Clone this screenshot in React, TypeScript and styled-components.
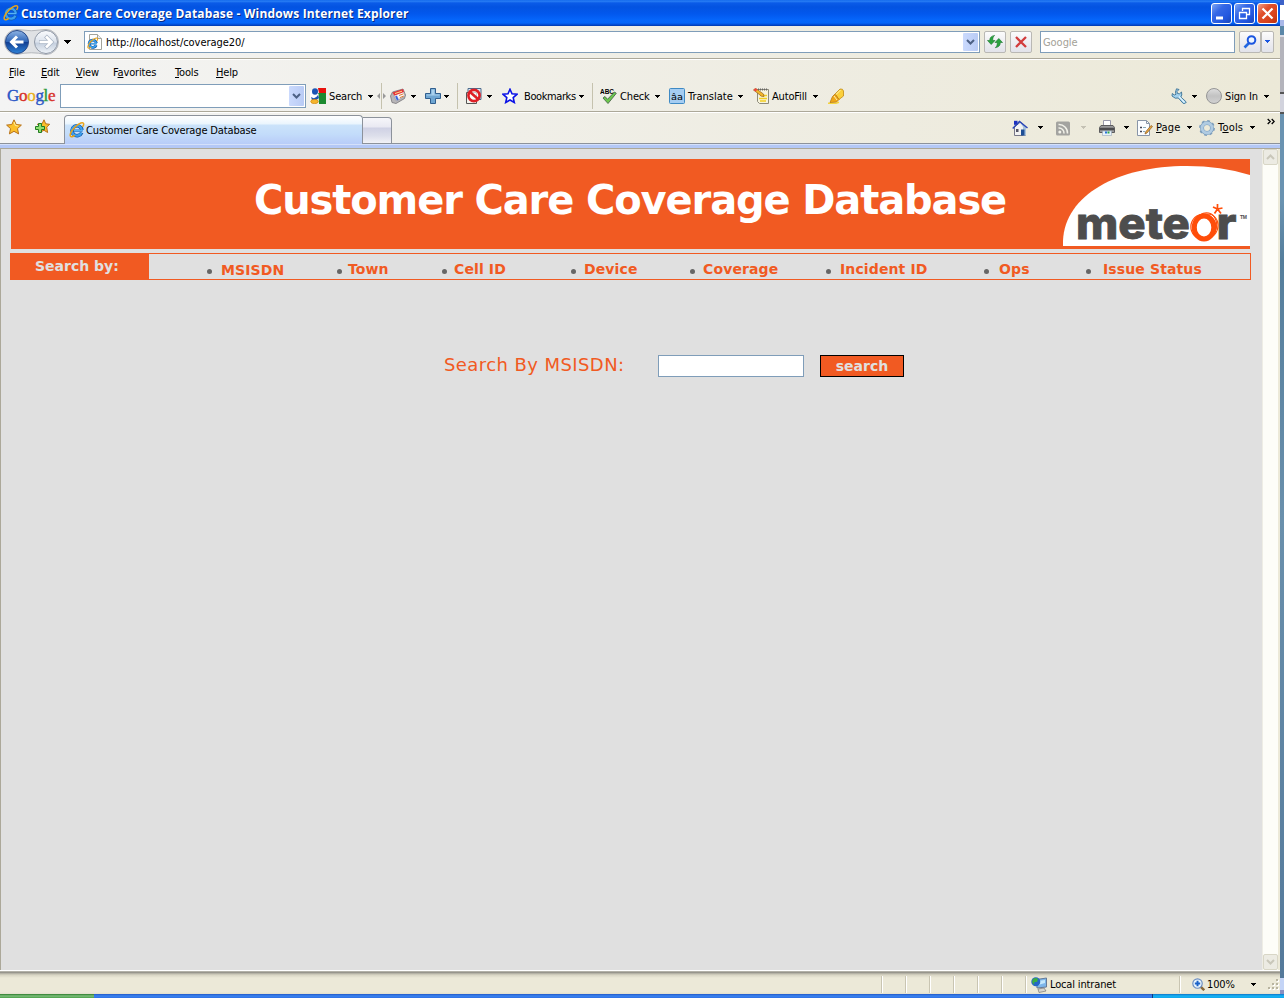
import React from 'react';
import styled, { createGlobalStyle } from 'styled-components';

const GlobalStyle = createGlobalStyle`
  * { box-sizing: border-box; }
  body { margin: 0; overflow: hidden; background: #5f87a4; }
`;

const UI = '"DejaVu Sans Condensed", "DejaVu Sans", sans-serif';
const PAGE = '"DejaVu Sans", Verdana, sans-serif';
const ORANGE = '#f15a22';

const Screen = styled.div`
  width: 1284px;
  height: 998px;
  display: flex;
  flex-direction: column;
  font-family: ${UI};
  font-size: 11px;
  color: #000;
  overflow: hidden;
`;
const Desktop = styled.div`
  display: flex;
  height: 994px;
`;
const Window = styled.div`
  width: 1280px;
  display: flex;
  flex-direction: column;
  background: #ece9d8;
`;
const Sliver = styled.div`
  width: 4px;
  background: linear-gradient(#3c62c8 0 5px, #fff 5px 20px, #a9b8e8 20px 26px, #5b87a8 26px 35px, #d9dbe6 35px 37px, #b4b4bc 37px 92px, #555 92px 94px, #d2d3dd 94px 112px, #555 112px 114px, #6a93b1 114px 200px, #557e9c 260px, #6a90ac 520px, #54799a 978px, #c4d4f6 978px 990px, #8a8fc0 990px);
`;
const Cell = styled.div<{ $w: number }>`
  width: ${p => p.$w}px;
  flex: none;
  display: flex;
  align-items: center;
`;
const Label = styled.span<{ $ls?: number; $w?: number }>`
  ${p => (p.$w ? `width: ${p.$w}px;` : '')}
  flex: none;
  white-space: nowrap;
  line-height: 14px;
  padding-top: 1px;
  letter-spacing: ${p => p.$ls ?? -0.15}px;
`;

/* ---- Title bar ---- */
const TitleBar = styled.div`
  height: 26px;
  flex: none;
  display: flex;
  align-items: center;
  padding: 0 2px 0 3px;
  background: linear-gradient(#0a5fe8 0, #2b82f6 1px, #0a5be8 3px, #0353e1 7px, #0258ee 14px, #0566fb 20px, #0465f8 23px, #0146cc 25px, #0139a8 26px);
`;
const TitleText = styled.div`
  flex: 1;
  padding: 1px 0 0 2px;
  color: #fff;
  font: 700 12px/16px "Open Sans", "Noto Sans", sans-serif;
  letter-spacing: 0.16px;
  text-shadow: 1px 1px 0 #0a2a80;
  white-space: nowrap;
`;
const WinButton = styled.div<{ $close?: boolean }>`
  width: 21px;
  height: 21px;
  margin-left: 2px;
  border: 1px solid #fff;
  border-radius: 3px;
  background: ${p => (p.$close
    ? 'linear-gradient(135deg, #f0a088, #e0502c 35%, #d8431c 70%, #b83210)'
    : 'linear-gradient(135deg, #7ea6f4, #3568e6 35%, #2358e0 70%, #1a45b8)')};
`;

/* ---- Address bar ---- */
const AddressBar = styled.div`
  height: 33px;
  flex: none;
  display: flex;
  align-items: center;
  padding: 0 0 1px 3px;
  background: linear-gradient(90deg, #f4f4f4, #f0efe8 40%, #ece9d8);
  border-bottom: 1px solid #aca899;
`;
const Field = styled.div<{ $w: number; $h: number; $mr?: number }>`
  width: ${p => p.$w}px;
  height: ${p => p.$h}px;
  margin-right: ${p => p.$mr ?? 0}px;
  flex: none;
  display: flex;
  align-items: center;
  padding: 0 1px 0 2px;
  background: #fff;
  border: 1px solid #7f9db9;
`;
const FieldText = styled.div<{ $muted?: boolean }>`
  flex: 1;
  color: ${p => (p.$muted ? '#a3a197' : '#000')};
  line-height: 14px;
  letter-spacing: -0.05px;
  padding-top: 2px;
`;
const DropButton = styled.div<{ $h: number }>`
  width: 15px;
  height: ${p => p.$h}px;
  display: flex;
  align-items: center;
  justify-content: center;
  border-radius: 1px;
  background: linear-gradient(90deg, #cbdafd, #b9cbf5);
`;
const ToolButton = styled.div<{ $w?: number; $mr?: number }>`
  width: ${p => p.$w ?? 22}px;
  height: 22px;
  margin-right: ${p => p.$mr ?? 0}px;
  flex: none;
  display: flex;
  align-items: center;
  justify-content: center;
  border: 1px solid #b9b8b4;
  border-radius: 2px;
  background: linear-gradient(#fcfcfc, #eeeef2 50%, #e2e3ea);
`;

/* ---- Menu and toolbar ---- */
const Menu = styled.div`
  height: 25px;
  flex: none;
  display: flex;
  align-items: center;
  padding-left: 9px;
  border-top: 1px solid #fff;
  background: linear-gradient(90deg, #f4f4f4, #f0efe8 40%, #ece9d8);
`;
const GoogleBar = styled.div`
  height: 28px;
  flex: none;
  display: flex;
  align-items: center;
  padding: 0 0 3px 7px;
  background: linear-gradient(90deg, #f4f4f4, #f0efe8 40%, #ece9d8);
  border-bottom: 1px solid #aca899;
`;
const GoogleMark = styled.div`
  width: 53px;
  flex: none;
  font: 17px/20px "Liberation Serif", serif;
  letter-spacing: -0.3px;
  -webkit-text-stroke: 0.4px;
`;
const Tint = styled.span<{ $c: string }>`
  color: ${p => p.$c};
  -webkit-text-stroke-color: ${p => p.$c};
`;
const Divider = styled.div<{ $mr: number }>`
  width: 1px;
  height: 26px;
  flex: none;
  margin-right: ${p => p.$mr}px;
  background: #c5c2ae;
`;
const Spacer = styled.div`
  flex: 1;
`;

/* ---- Tabs ---- */
const TabRow = styled.div`
  height: 32px;
  flex: none;
  display: flex;
  align-items: flex-end;
  padding-left: 6px;
  border-top: 1px solid #fff;
  border-bottom: 1px solid #8c929b;
  background: linear-gradient(90deg, #f4f4f4, #f0efe8 40%, #ece9d8);
`;
const TabIcons = styled.div<{ $raised?: boolean }>`
  display: flex;
  height: 31px;
  align-items: center;
  padding-bottom: ${p => (p.$raised ? 2 : 0)}px;
`;
const Tab = styled.div`
  width: 299px;
  height: 29px;
  margin-bottom: -1px;
  flex: none;
  display: flex;
  align-items: center;
  padding-left: 4px;
  border: 1px solid #8c929b;
  border-bottom: 0;
  border-radius: 4px 4px 0 0;
  background: linear-gradient(#fff, #eaf5fd 8px, #cbe3fa 9px, #c3dcfa 18px, #b8ccf8);
`;
const NewTab = styled.div`
  width: 29px;
  height: 26px;
  flex: none;
  border: 1px solid #8c929b;
  border-left: 0;
  border-bottom: 0;
  border-radius: 0 4px 0 0;
  background: linear-gradient(#f6f6fa, #e9e9f2 9px, #cfd1e4 10px, #dddfeb 18px, #f2f2f6);
`;
const Band = styled.div`
  height: 5px;
  flex: none;
  background: #b4c8f6;
  border-top: 1px solid #d4e0fa;
  border-bottom: 1px solid #aca899;
`;
const Overflow = styled.div`
  align-self: flex-start;
  width: 13px;
  padding-top: 3px;
`;

/* ---- Page ---- */
const Viewport = styled.div`
  height: 821px;
  flex: none;
  display: flex;
  border-left: 1px solid #aca899;
  background: #e0e0e0;
`;
const Page = styled.div`
  width: 1261px;
  flex: none;
  padding: 10px 0 0 9px;
  font-family: ${PAGE};
`;
const Banner = styled.div`
  width: 1239px;
  height: 90px;
  margin: 0 0 4px 1px;
  display: flex;
  align-items: flex-start;
  background: ${ORANGE};
`;
const Heading = styled.h1`
  margin: 0;
  width: 1052px;
  padding: 17px 0 0 243px;
  color: #fff;
  font: 700 40px/48px ${PAGE};
  letter-spacing: -1.13px;
  white-space: nowrap;
`;
const SearchNav = styled.div`
  width: 1241px;
  height: 27px;
  display: flex;
  border: 1px solid ${ORANGE};
  color: ${ORANGE};
  font-weight: 700;
  font-size: 14px;
`;
const NavTitle = styled.div`
  width: 138px;
  margin-right: 58px;
  padding: 3px 0 0 24px;
  flex: none;
  color: #e0e0e0;
  background: ${ORANGE};
  line-height: 18px;
`;
const NavItem = styled.div<{ $w: number; $gap: number; $drop?: number }>`
  width: ${p => p.$w}px;
  flex: none;
  display: flex;
  align-items: flex-start;
  gap: ${p => p.$gap}px;
  padding-top: ${p => 6 + (p.$drop ?? 0)}px;
  line-height: 18px;
  letter-spacing: 0.12px;
  white-space: nowrap;
`;
const Bullet = styled.i<{ $up?: number }>`
  width: 5px;
  height: 5px;
  flex: none;
  margin-top: ${p => 9 - (p.$up ?? 0)}px;
  border-radius: 50%;
  background: #666;
`;
const SearchForm = styled.div`
  display: flex;
  align-items: center;
  padding: 74px 0 0 434px;
  color: ${ORANGE};
`;
const FormLabel = styled.label`
  width: 214px;
  flex: none;
  font-size: 18px;
  line-height: 22px;
  letter-spacing: 0.42px;
  padding-bottom: 2px;
`;
const TextInput = styled.input`
  width: 146px;
  height: 22px;
  margin: 0 16px 0 0;
  padding: 0 2px;
  border: 1px solid #7f9db9;
  background: #fff;
  outline: 0;
`;
const SubmitButton = styled.button`
  width: 84px;
  height: 22px;
  padding: 0;
  border: 1px solid #000;
  background: ${ORANGE};
  color: #e0e0e0;
  font: 700 14px/18px ${PAGE};
`;
const Scrollbar = styled.div`
  width: 16px;
  flex: none;
  display: flex;
  flex-direction: column;
  justify-content: space-between;
  background: #fdfdf8;
  border-left: 1px solid #eeede5;
`;
const ScrollButton = styled.div`
  width: 15px;
  height: 16px;
  display: flex;
  align-items: center;
  justify-content: center;
  background: #ecebe3;
  border: 1px solid #d8d6c6;
  border-radius: 2px;
`;
const Edge = styled.div`
  flex: 1;
  background: #ece9d8;
`;

/* ---- Status bar and taskbar ---- */
const StatusBar = styled.div`
  height: 25px;
  flex: none;
  display: flex;
  align-items: center;
  padding: 3px 0 0 881px;
  border-top: 1px solid #fff;
  background: linear-gradient(#e0dfd4 0, #85837c 1px, #a9a79c 2px, #d8d5c4 4px, #ece9d8 7px, #ece9d8 21px, #dedac6 24px);
`;
const Pane = styled.div<{ $w: number; $pad?: number }>`
  width: ${p => p.$w}px;
  height: 17px;
  flex: none;
  display: flex;
  align-items: center;
  padding-left: ${p => p.$pad ?? 0}px;
  border-left: 1px solid #c9c5b2;
  box-shadow: inset 1px 0 0 #fff;
`;
const Taskbar = styled.div`
  height: 4px;
  flex: none;
  display: flex;
  background: linear-gradient(#2158c8, #3a84f0 2px, #2f70e4);
`;
const StartButton = styled.div`
  width: 94px;
  background: linear-gradient(#2a7a2c, #7fbf7c 2px, #4a9f48);
`;
const Tray = styled.div`
  width: 132px;
  margin-left: auto;
  border-left: 1px solid #103a80;
  background: linear-gradient(#0f73c8, #16b4f4 2px, #12a4ea);
`;

const Arrow = ({ w = 5, c = '#000' }: { w?: number; c?: string }) => (
  <svg width={w} height={w === 7 ? 4 : 3} viewBox={`0 0 ${w} ${w === 7 ? 4 : 3}`} shapeRendering="crispEdges">
    <path d={w === 7 ? 'M0 0h7v1h-1v1h-1v1h-1v1h-1v-1h-1v-1h-1v-1h-1z' : 'M0 0h5v1h-1v1h-1v1h-1v-1h-1v-1h-1z'} fill={c} />
  </svg>
);
const Chevron = ({ c = '#4d6185', up = false }: { c?: string; up?: boolean }) => (
  <svg width="9" height="6" viewBox="0 0 9 6">
    <path d={up ? 'M1 5l3.5-3.5L8 5' : 'M1 1l3.5 3.5L8 1'} fill="none" stroke={c} strokeWidth="2" />
  </svg>
);
const MoreIcon = () => (
  <svg width="8" height="7" viewBox="0 0 8 7">
    <path d="M.7 1l2.500 2.500L.7 6M4.700 1l2.500 2.500L4.700 6" fill="none" stroke="#000" strokeWidth="1.300" />
  </svg>
);
const Icon = ({ s = 16, children }: { s?: number; children: React.ReactNode }) => (
  <svg width={s} height={s} viewBox="0 0 16 16">{children}</svg>
);
const EMark = ({ bold = false }: { bold?: boolean }) => (
  <>
    <path d="M4.200 8.600h9.300" stroke="#1a6cc4" strokeWidth="2.200" />
    <path d="M12.700 10.600A5 5 0 1 1 13 8" fill="none" stroke="#145aa8" strokeWidth={bold ? 4 : 3.600} />
    <path d="M12.400 10.700A5 5 0 1 1 12.800 8.200" fill="none" stroke="#3b9fee" strokeWidth="2.300" />
    <path d="M4.800 8.500h8.700" stroke="#56b4f4" strokeWidth="1.200" />
    <path d="M13.600 5C16 .8 14.400-.4 9.600 2.200 4 5.600.2 12 1.400 14.200c.6 1.100 2.500.5 4.300-.9" fill="none" stroke="#e8a41a" strokeWidth="1.500" />
  </>
);
const IeIcon = ({ s = 16 }: { s?: number }) => <Icon s={s}><EMark /></Icon>;
const Nav = () => (
  <svg width="56" height="28" viewBox="0 0 56 28">
    <defs>
      <linearGradient id="back" x1="0" y1="0" x2="0" y2="1">
        <stop offset="0" stopColor="#8fb4e4" /><stop offset=".48" stopColor="#2f66b8" />
        <stop offset=".52" stopColor="#113f94" /><stop offset="1" stopColor="#2f84d8" />
      </linearGradient>
      <linearGradient id="fwd" x1="0" y1="0" x2="0" y2="1">
        <stop offset="0" stopColor="#fbfcfe" /><stop offset=".5" stopColor="#dbe2ec" />
        <stop offset=".55" stopColor="#c4cfde" /><stop offset="1" stopColor="#f0f4f9" />
      </linearGradient>
    </defs>
    <path d="M14 1.500Q28 4 43 1.500A12.500 12.500 0 0 1 43 26.500Q28 23 14 26.500A12.500 12.500 0 0 1 14 1.500z" fill="#dfe1e4" stroke="#b4b7bc" />
    <circle cx="14" cy="14" r="11.500" fill="url(#back)" stroke="#27498a" />
    <path d="M20.500 14H9M14 8.500L8.500 14l5.500 5.500" fill="none" stroke="#fff" strokeWidth="3" />
    <circle cx="43" cy="14" r="11.500" fill="url(#fwd)" stroke="#8f98a6" />
    <path d="M36 14H48.500M42.500 8l6 6-6 6" fill="none" stroke="#a9b4c4" strokeWidth="4" />
    <path d="M36.500 14H48M43 8.500l5.500 5.500-5.500 5.500" fill="none" stroke="#fff" strokeWidth="2.600" />
  </svg>
);
const PageIeIcon = () => (
  <Icon>
    <path d="M2.500.5h8l4 4v11h-12z" fill="#fff" stroke="#a3a39b" /><path d="M10.500.5v4h4" fill="#eee" stroke="#a3a39b" />
    <g transform="translate(0 3.500) scale(.72)"><EMark bold /></g>
  </Icon>
);
const RefreshIcon = () => (
  <Icon>
    <path d="M.5 6.500h2.200C2.800 3.500 4.200 2 7.600 1.400 6.200 2.700 5.700 4 5.700 6.500H8L4.200 10.500z" fill="#2aa43e" stroke="#17762a" strokeWidth=".6" />
    <path d="M8 8.500h2.300c0 2.500-.5 3.800-2 5.200 3.500-.6 5-2.100 5-5.200h2.200L11.800 4.500z" fill="#2aa43e" stroke="#17762a" strokeWidth=".6" />
  </Icon>
);
const GoogleSquare = () => (
  <Icon>
    <path d="M8 0h8v5H9z" fill="#e8120c" /><path d="M8 5h8v11H9z" fill="#1c8a30" />
    <path d="M0 3q5-3 8.500 3v10H0z" fill="#fff" />
    <ellipse cx="5" cy="3.500" rx="3" ry="3.300" fill="#1b55b4" /><path d="M1 9q4 3 7-2l1 3q-3 3-7 2z" fill="#1b55b4" />
    <ellipse cx="4.500" cy="13.500" rx="3.800" ry="2.200" fill="#f5b52c" stroke="#c57b0a" strokeWidth=".6" />
  </Icon>
);
const NewsIcon = () => (
  <Icon>
    <path d="M.5 8l2-4L13 1l2.500 6-1 3.500L6 15.500l-4-1z" fill="#b8b6b8" stroke="#77757a" strokeWidth=".8" />
    <path d="M2.500 5L13 1.500l2 6.500-8.500 5z" fill="#f7f7fb" stroke="#8d8d94" strokeWidth=".6" />
    <path d="M2.500 4.500L13 1l1 3L4.300 7.800z" fill="#e4343a" /><path d="M5 5.500L12 3.200" stroke="#ffe08a" />
    <path d="M6 8l1.800 4" stroke="#3d66dd" strokeWidth="2" /><path d="M9 7.500l4.500-1.700M9.800 9.700l4-1.700" stroke="#e07a30" />
  </Icon>
);
const PlusIcon = () => (
  <Icon><path d="M5.500.5h5v5h5v5h-5v5h-5v-5h-5v-5h5z" fill="#6fa6d2" stroke="#315f8e" /><path d="M6.500 1.500h3v5h5v1h-13v-1h5z" fill="#a9d0ec" /></Icon>
);
const PopupIcon = () => (
  <Icon>
    <path d="M2 .5h13v11H2z" fill="#dceaf6" stroke="#4d6b8c" /><path d="M.5 4.500h10v11H.5z" fill="#f4f4ee" stroke="#555" />
    <circle cx="8" cy="7.500" r="5.600" fill="#fff" fillOpacity=".7" stroke="#de1f26" strokeWidth="2.600" /><path d="M4 4l8 7" stroke="#de1f26" strokeWidth="2.600" />
  </Icon>
);
const BlueStar = () => (
  <Icon><path d="M8 1.300l2 4.500 4.900.5-3.700 3.300 1.100 4.900L8 12l-4.300 2.500 1.100-4.900L1.100 6.300 6 5.800z" fill="#fff" stroke="#0b12e6" strokeWidth="1.600" /></Icon>
);
const CheckIcon = () => (
  <svg width="18" height="18" viewBox="0 0 18 18">
    <text x="0" y="6.500" fontFamily="Liberation Sans" fontWeight="700" fontSize="7.500" textLength="14" lengthAdjust="spacingAndGlyphs">ABC</text>
    <path d="M3 11l2-1.500 2.500 2.800L14.500 5l1.800 1.300L8 16.500z" fill="#6cc84c" stroke="#4a6a4a" strokeWidth=".9" />
  </svg>
);
const TranslateIcon = () => (
  <Icon>
    <rect x=".5" y=".5" width="15" height="15" rx="1" fill="#a5cdf2" stroke="#3f8ac4" />
    <text x="2" y="11.500" fontFamily="DejaVu Sans" fontSize="9.500" textLength="12" lengthAdjust="spacingAndGlyphs">âa</text>
  </Icon>
);
const AutoFillIcon = () => (
  <Icon>
    <path d="M4.500 1.500h11v14h-9l-2-2z" fill="#f6f3dc" stroke="#8d8a7a" /><path d="M5 1.500h10" stroke="#666" strokeWidth="2" strokeDasharray="1 1" />
    <path d="M7 7.500h7M6 10.500h8M7 13h6" stroke="#f4ce1e" strokeWidth="1.500" />
    <path d="M.5 2L2.500.3l8 5.700.5 2.500-2.500-.3z" fill="#f3b72a" stroke="#94601c" strokeWidth=".7" /><path d="M.5 2L2.500.3l2 1.500L2.500 3.600z" fill="#e44" />
  </Icon>
);
const MarkerIcon = () => (
  <Icon>
    <path d="M0 15.200h8l3-1" stroke="#f5d43c" strokeWidth="1.500" fill="none" />
    <path d="M7 6l5-5q3-.5 3.500 2v5l-4.500 3.500z" fill="#fbd03c" stroke="#c28c14" strokeWidth=".8" />
    <path d="M4.500 8.500L7 6l4 5.500-2.500 2.500-6.500.5z" fill="#f0a818" stroke="#b87812" strokeWidth=".8" /><path d="M8 6.500L12.500 2M6 8l3 4" stroke="#fff2b0" />
  </Icon>
);
const WrenchIcon = () => (
  <Icon>
    <path d="M5.500.8L8 1.500 6 3.500l.5 2 2 .3L10.500 4l.3 3-1 2 5.500 5-1.500 1.700-1.500-.2-5-5.500-3 .2L1 8l.3-2.500 2 1.500L5 6.300 4.500 4z" fill="#a3d2ee" stroke="#3a7194" strokeWidth=".9" />
    <path d="M8 8.500l5.500 5.800" stroke="#e4f6ff" strokeWidth="1.200" />
  </Icon>
);
const Orb = () => (
  <Icon>
    <defs><linearGradient id="orb" x1="0" y1="0" x2="0" y2="1"><stop offset="0" stopColor="#dedede" /><stop offset=".5" stopColor="#c2c2c2" /><stop offset="1" stopColor="#d2d2d2" /></linearGradient></defs>
    <circle cx="8" cy="8" r="7.500" fill="url(#orb)" stroke="#969696" />
  </Icon>
);
const FavStar = () => (
  <Icon><path d="M8 .8l2.200 4.700 5.200.6-3.900 3.500 1.100 5.300L8 12.300l-4.600 2.600 1.100-5.300L.6 6.100l5.200-.6z" fill="#fcc02c" stroke="#b8721a" /><path d="M8 3l1.300 3.500 3 .5" fill="none" stroke="#ffeea0" /></Icon>
);
const AddStar = () => (
  <Icon>
    <path d="M10 .8l1.700 4 4 .5-3 2.800.9 5.400L10 11.300l-4 2 .8-5-3.500-3 4.800-.5z" fill="#fcc02c" stroke="#b8721a" />
    <path d="M4.500 4.500h3v3h3v3h-3v3h-3v-3h-3v-3h3z" fill="#8ee070" stroke="#237a22" />
  </Icon>
);
const HomeIcon = () => (
  <Icon>
    <path d="M2.500 7v8.500h11V7L8.500 2z" fill="#f2f2f2" stroke="#778" /><path d="M8 2l6 5v8.500h-3V7z" fill="#a9c3dc" />
    <path d="M2 .8h3.500v4H2z" fill="#1c2fc0" /><path d="M.7 8.500L7.500 1.500 15.500 8" fill="none" stroke="#2a46b8" strokeWidth="1.500" />
    <path d="M9 9.500h3.500v6H9z" fill="#1f4f96" /><path d="M4 9h2.500v3H4z" fill="#556" />
  </Icon>
);
const RssIcon = () => (
  <Icon>
    <rect x="1" y="1.500" width="14" height="14" rx="1.500" fill="#a3a3a0" /><circle cx="4.800" cy="12" r="1.500" fill="#f2f2ea" />
    <path d="M3.500 8a5 5 0 0 1 5.500 5.500M3.500 4.500a8.500 8.500 0 0 1 9 9" fill="none" stroke="#f2f2ea" strokeWidth="1.500" />
  </Icon>
);
const PrinterIcon = () => (
  <Icon>
    <path d="M4.500.5h7v6h-7z" fill="#fff" stroke="#99a" /><path d="M2 5.500h12l1.500 2v5H.5v-5z" fill="#9a9a9c" stroke="#5c5c5e" /><path d="M1 9h14" stroke="#4c4c4e" strokeWidth="2.500" />
    <path d="M3.500 11h9v4.500h-9z" fill="#e8f2fa" stroke="#9ab" strokeWidth=".6" /><path d="M6 12.500h2" stroke="#2a72d8" strokeWidth="2" /><path d="M8.500 12.500h2" stroke="#2ca84a" strokeWidth="2" />
  </Icon>
);
const PageIcon = () => (
  <Icon>
    <path d="M.5.5h9l3 3v12H.5z" fill="#fbfdff" stroke="#8895a8" /><path d="M9.500.5v3h3" fill="none" stroke="#8895a8" />
    <path d="M3 7.500h2M3 11.500h2" stroke="#445" strokeWidth="1.600" /><path d="M6 7.500h3M6 11.500h2" stroke="#8ab" />
    <path d="M15.500 6.500L10 13l-2 1 .5-2L14 5.500z" fill="#e8a63c" stroke="#8a5c26" strokeWidth=".7" />
  </Icon>
);
const GearIcon = () => (
  <Icon>
    <circle cx="8" cy="8" r="6.800" fill="none" stroke="#7c9cba" strokeWidth="2.200" strokeDasharray="2.670 2.670" />
    <circle cx="8" cy="8" r="5" fill="none" stroke="#7d9fbe" strokeWidth="4" /><circle cx="8" cy="8" r="5" fill="none" stroke="#b0cbe2" strokeWidth="2.800" />
  </Icon>
);
const IntranetIcon = () => (
  <Icon>
    <path d="M5.500 2.500l10-1.500v9l-9.500 1z" fill="#7db6ea" stroke="#667a96" /><path d="M7 4l7-1v3L7 8z" fill="#c4e8fc" />
    <path d="M7 12l6-1 2 3-7 1.500z" fill="#d5d5cf" stroke="#777" strokeWidth=".7" /><circle cx="4.800" cy="4.800" r="4.500" fill="#2566c8" /><path d="M2 2q3-2 5 0L6 5 3.500 5 3 8 1 5z" fill="#3cae42" />
  </Icon>
);
const ZoomIcon = () => (
  <Icon s={13}>
    <path d="M10.500 10.500l4.500 4.500" stroke="#8a6a3c" strokeWidth="3" /><circle cx="6.800" cy="6.800" r="5.800" fill="#e8f4fd" stroke="#6a8cc0" strokeWidth="1.400" />
    <path d="M6.800 3.500v6.600M3.500 6.800h6.600" stroke="#1b62c8" strokeWidth="2.400" />
  </Icon>
);
const Grip = () => (
  <svg width="12" height="12" viewBox="0 0 12 12" shapeRendering="crispEdges">
    {[[8, 0], [8, 4], [4, 4], [8, 8], [4, 8], [0, 8]].map(([x, y]) => (
      <g key={`${x}-${y}`}><rect x={x + 1} y={y + 1} width="2" height="2" fill="#fff" /><rect x={x} y={y} width="2" height="2" fill="#b8b4a0" /></g>
    ))}
  </svg>
);
const MeteorLogo = () => (
  <svg width="187" height="90" viewBox="0 0 187 90">
    <path d="M0 87C-2 38 52 7 124 7q34 0 63 9v71z" fill="#fff" />
    <g fontFamily="Inter" fontWeight="800" fontSize="43" fill="#4d4d4d" stroke="#4d4d4d" strokeWidth=".8">
      <text x="13" y="79.500" textLength="114" lengthAdjust="spacingAndGlyphs">mete</text>
      <text x="153.500" y="79.500" textLength="20" lengthAdjust="spacingAndGlyphs">r</text>
    </g>
    <g fill="none" stroke="#ff4e0a">
      <ellipse cx="141" cy="68.500" rx="9.800" ry="11.500" strokeWidth="5" />
      <ellipse cx="142.500" cy="67" rx="11" ry="13.500" strokeWidth="1.200" transform="rotate(14 142 67)" />
      <ellipse cx="140.500" cy="67.500" rx="12.500" ry="12.500" strokeWidth="1.200" transform="rotate(-20 141 68)" />
      <ellipse cx="144" cy="67" rx="11" ry="12.500" strokeWidth="1" transform="rotate(20 143 67)" />
      <path d="M154.500 45v5M154.500 50l-4.500-2M154.500 50l5-1M154.500 50l-3 4.500M154.500 50l3.500 4.500" strokeWidth="1.700" />
    </g>
    <text x="177" y="60" fontFamily="Liberation Sans" fontWeight="700" fontSize="5" textLength="7" fill="#4d4d4d">TM</text>
  </svg>
);

const menus: [string, string, string, number][] = [
  ['', 'F', 'ile', 32], ['', 'E', 'dit', 35], ['', 'V', 'iew', 37], ['F', 'a', 'vorites', 62], ['', 'T', 'ools', 41], ['', 'H', 'elp', 30],
];
const navItems = [
  { t: 'MSISDN', w: 130, g: 9, d: 1 }, { t: 'Town', w: 105, g: 6 }, { t: 'Cell ID', w: 129, g: 7 }, { t: 'Device', w: 119, g: 8 },
  { t: 'Coverage', w: 136, g: 8 }, { t: 'Incident ID', w: 158, g: 9 }, { t: 'Ops', w: 102, g: 10 }, { t: 'Issue Status', w: 120, g: 12 },
];

export default function App() {
  return (
    <Screen>
      <GlobalStyle />
      <Desktop>
        <Window>
          <TitleBar>
            <IeIcon />
            <TitleText>Customer Care Coverage Database - Windows Internet Explorer</TitleText>
            <WinButton><svg width="19" height="19"><path d="M4 14h7" stroke="#fff" strokeWidth="3" /></svg></WinButton>
            <WinButton><svg width="19" height="19"><path d="M7.500 7V4.500h7v6H12M4.500 8.500h7v6h-7zM4 8.500h8M7 4.500h8" stroke="#fff" strokeWidth="1.300" fill="none" /></svg></WinButton>
            <WinButton $close><svg width="19" height="19"><path d="M4.500 4.500l10 10M14.500 4.500l-10 10" stroke="#fff" strokeWidth="2.200" /></svg></WinButton>
          </TitleBar>

          <AddressBar>
            <Cell $w={61}><Nav /></Cell>
            <Cell $w={20}><Arrow w={7} /></Cell>
            <Field $w={896} $h={22} $mr={4}>
              <Cell $w={19}><PageIeIcon /></Cell>
              <FieldText>http://localhost/coverage20/</FieldText>
              <DropButton $h={18}><Chevron /></DropButton>
            </Field>
            <ToolButton $mr={4}><RefreshIcon /></ToolButton>
            <ToolButton $mr={8}><svg width="12" height="12"><path d="M1 1l10 10M11 1L1 11" stroke="#d23c3c" strokeWidth="2.300" /></svg></ToolButton>
            <Field $w={195} $h={22} $mr={4}><FieldText $muted>Google</FieldText></Field>
            <ToolButton><svg width="14" height="14"><path d="M1.500 12.500L6 8" stroke="#2468e0" strokeWidth="2.600" /><circle cx="8.500" cy="5" r="3.800" fill="#eef6ff" stroke="#1b56e0" strokeWidth="2" /></svg></ToolButton>
            <ToolButton $w={13}><Arrow c="#1b56e0" /></ToolButton>
          </AddressBar>

          <Menu>
            {menus.map(([a, u, b, w]) => <Label key={u + b} $w={w}>{a}<u>{u}</u>{b}</Label>)}
          </Menu>

          <GoogleBar>
            <GoogleMark>
              <Tint $c="#2a56c6">G</Tint><Tint $c="#d8322a">o</Tint><Tint $c="#e8b020">o</Tint><Tint $c="#2a56c6">g</Tint><Tint $c="#2a9a3a">l</Tint><Tint $c="#d8322a">e</Tint>
            </GoogleMark>
            <Field $w={246} $h={24} $mr={4}><Spacer /><DropButton $h={20}><Chevron /></DropButton></Field>
            <Cell $w={19}><GoogleSquare /></Cell>
            <Label $w={39}>Search</Label>
            <Cell $w={9}><Arrow /></Cell>
            <Cell $w={13}>
              <svg width="9" height="26" viewBox="0 0 9 26"><path d="M4.500 0v26" stroke="#c5c2ae" /><path d="M3 10v6L0 13zM6 10v6l3-3z" fill="#999" /></svg>
            </Cell>
            <Cell $w={21}><NewsIcon /></Cell>
            <Cell $w={14}><Arrow /></Cell>
            <Cell $w={19}><PlusIcon /></Cell>
            <Cell $w={13}><Arrow /></Cell>
            <Divider $mr={8} />
            <Cell $w={21}><PopupIcon /></Cell>
            <Cell $w={15}><Arrow /></Cell>
            <Cell $w={22}><BlueStar /></Cell>
            <Label $w={55} $ls={-0.4}>Bookmarks</Label>
            <Cell $w={13}><Arrow /></Cell>
            <Divider $mr={7} />
            <Cell $w={20}><CheckIcon /></Cell>
            <Label $w={35}>Check</Label>
            <Cell $w={14}><Arrow /></Cell>
            <Cell $w={19}><TranslateIcon /></Cell>
            <Label $w={50} $ls={0}>Translate</Label>
            <Cell $w={15}><Arrow /></Cell>
            <Cell $w={19}><AutoFillIcon /></Cell>
            <Label $w={41}>AutoFill</Label>
            <Cell $w={15}><Arrow /></Cell>
            <Cell $w={16}><MarkerIcon /></Cell>
            <Spacer />
            <Cell $w={21}><WrenchIcon /></Cell>
            <Cell $w={14}><Arrow /></Cell>
            <Cell $w={19}><Orb /></Cell>
            <Label $w={39}>Sign In</Label>
            <Cell $w={16}><Arrow /></Cell>
          </GoogleBar>

          <TabRow>
            <TabIcons $raised><Cell $w={28}><FavStar /></Cell><Cell $w={30}><AddStar /></Cell></TabIcons>
            <Tab><Cell $w={17}><IeIcon /></Cell><Label>Customer Care Coverage Database</Label></Tab>
            <NewTab />
            <Spacer />
            <TabIcons>
              <Cell $w={26}><HomeIcon /></Cell>
              <Cell $w={17}><Arrow /></Cell>
              <Cell $w={26}><RssIcon /></Cell>
              <Cell $w={18}><Arrow c="#c4c1b4" /></Cell>
              <Cell $w={25}><PrinterIcon /></Cell>
              <Cell $w={13}><Arrow /></Cell>
              <Cell $w={19}><PageIcon /></Cell>
              <Label $w={31} $ls={0.1}><u>P</u>age</Label>
              <Cell $w={12}><Arrow /></Cell>
              <Cell $w={19}><GearIcon /></Cell>
              <Label $w={32} $ls={0.2}>T<u>o</u>ols</Label>
              <Cell $w={17}><Arrow /></Cell>
              <Overflow><MoreIcon /></Overflow>
            </TabIcons>
          </TabRow>
          <Band />

          <Viewport>
            <Page>
              <Banner><Heading>Customer Care Coverage Database</Heading><MeteorLogo /></Banner>
              <SearchNav>
                <NavTitle>Search by:</NavTitle>
                {navItems.map(n => (
                  <NavItem key={n.t} $w={n.w} $gap={n.g} $drop={n.d}><Bullet $up={n.d} /><span>{n.t}</span></NavItem>
                ))}
              </SearchNav>
              <SearchForm>
                <FormLabel htmlFor="msisdn">Search By MSISDN:</FormLabel>
                <TextInput id="msisdn" />
                <SubmitButton>search</SubmitButton>
              </SearchForm>
            </Page>
            <Scrollbar>
              <ScrollButton><Chevron up c="#c9c7ba" /></ScrollButton>
              <ScrollButton><Chevron c="#c9c7ba" /></ScrollButton>
            </Scrollbar>
            <Edge />
          </Viewport>

          <StatusBar>
            {[0, 1, 2, 3, 4, 5].map(i => <Pane key={i} $w={24} />)}
            <Pane $w={154} $pad={5}><Cell $w={19}><IntranetIcon /></Cell><Label>Local intranet</Label></Pane>
            <Pane $w={89} $pad={12}>
              <Cell $w={15}><ZoomIcon /></Cell><Label $w={44}>100%</Label><Arrow />
            </Pane>
            <Grip />
          </StatusBar>
        </Window>
        <Sliver />
      </Desktop>
      <Taskbar><StartButton /><Tray /></Taskbar>
    </Screen>
  );
}
